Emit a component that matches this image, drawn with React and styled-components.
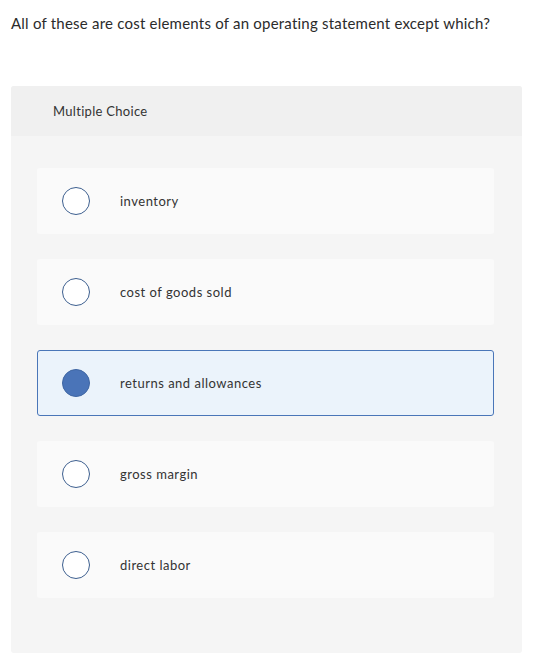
import React, { useState } from "react";
import styled, { createGlobalStyle } from "styled-components";

const Global = createGlobalStyle`
  html, body { margin: 0; padding: 0; background: #fff; }
  body { font-family: "Lato", "Open Sans", sans-serif; color: #333; }
`;

const Page = styled.div`
  padding: 12px 38px 0 11px;
`;

const Question = styled.p`
  margin: 0;
  font-size: 15px;
  line-height: 22px;
  letter-spacing: 0.22px;
  color: #2b2b2b;
`;

const Panel = styled.section`
  margin-top: 52px;
  background: #f5f5f5;
  border-radius: 3px;
  height: 567px;
  overflow: hidden;
`;

const Header = styled.div`
  height: 50px;
  background: #f0f0f0;
  display: flex;
  align-items: center;
  padding-left: 42px;
  font-size: 13px;
  letter-spacing: 0.3px;
  color: #333;
`;

const List = styled.div`
  display: flex;
  flex-direction: column;
  gap: 25px;
  padding: 32px 28px 0 26px;
`;

const Option = styled.label`
  height: 66px;
  box-sizing: border-box;
  display: flex;
  align-items: center;
  border-radius: 3px;
  border: 1px solid ${(p) => (p.$selected ? "#4a76b8" : "transparent")};
  background: ${(p) => (p.$selected ? "#ebf3fb" : "#fafafa")};
  cursor: pointer;
`;

const Radio = styled.span`
  width: 28px;
  height: 28px;
  box-sizing: border-box;
  border-radius: 50%;
  margin-left: 24px;
  border: 1.5px solid ${(p) => (p.$selected ? "#3f66a3" : "#3d5f8f")};
  background: ${(p) => (p.$selected ? "#4a74b8" : "#fff")};
  flex-shrink: 0;
`;

const Text = styled.span`
  margin-left: 30px;
  font-size: 13px;
  letter-spacing: 0.5px;
  color: #333;
`;

const options = [
  "inventory",
  "cost of goods sold",
  "returns and allowances",
  "gross margin",
  "direct labor",
];

export default function App() {
  const [sel, setSel] = useState(2);
  return (
    <Page>
      <Global />
      <Question>All of these are cost elements of an operating statement except which?</Question>
      <Panel>
        <Header>Multiple Choice</Header>
        <List>
          {options.map((o, i) => (
            <Option key={o} $selected={sel === i} onClick={() => setSel(i)}>
              <Radio $selected={sel === i} />
              <Text>{o}</Text>
            </Option>
          ))}
        </List>
      </Panel>
    </Page>
  );
}
